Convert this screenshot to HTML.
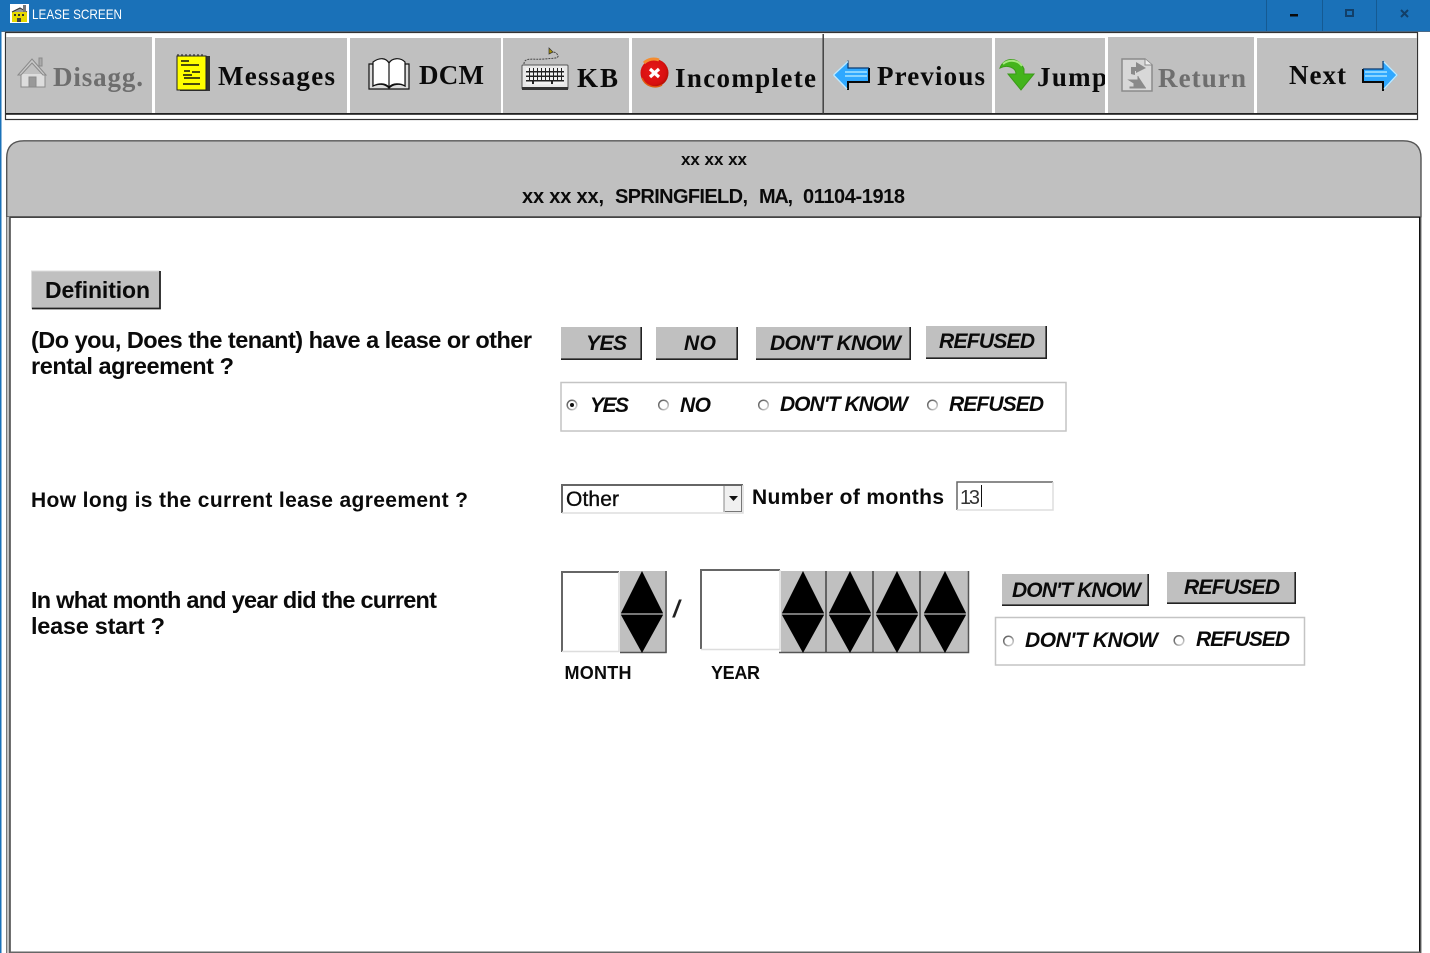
<!DOCTYPE html>
<html><head><meta charset="utf-8"><title>LEASE SCREEN</title>
<style>
html,body{margin:0;padding:0;background:#fff;width:1430px;height:953px;overflow:hidden}
svg{display:block}
.tb{font-family:"Liberation Serif",serif;font-weight:bold;font-size:27px;fill:#0a0a0a}
.dis{fill:#6e6e6e}
.s{font-family:"Liberation Sans",sans-serif}
.b{font-weight:bold;fill:#0a0a0a}
.bi{font-weight:bold;font-style:italic;font-size:21px;fill:#0a0a0a}
.q{font-size:23.5px}
</style></head><body>
<svg width="1430" height="953" viewBox="0 0 1430 953" xmlns="http://www.w3.org/2000/svg">
<defs>
<g id="diamond"><path d="M0 0L21 42H-21Z" fill="#000"/><path d="M-21 44H21L0 82Z" fill="#000"/><rect x="-21" y="42" width="42" height="2" fill="#777"/></g>
<linearGradient id="rg" x1="0" y1="0" x2="1" y2="1"><stop offset="0" stop-color="#555"/><stop offset=".5" stop-color="#888"/><stop offset="1" stop-color="#e4e4e4"/></linearGradient>
<radialGradient id="red" cx=".45" cy=".45" r=".6"><stop offset="0" stop-color="#e81818"/><stop offset=".75" stop-color="#d81010"/><stop offset="1" stop-color="#a81000"/></radialGradient>
</defs>
<!-- title bar -->
<rect width="1430" height="31" fill="#1a71b8"/>
<rect y="31" width="1430" height="1" fill="#4a6a88"/>
<rect x="10" y="4" width="19" height="19" fill="#fff"/>
<rect x="12" y="12" width="15" height="10" fill="#e6d800"/>
<path d="M12 12L20 8L27 12" fill="#999" stroke="#333"/>
<rect x="23" y="5" width="3" height="7" fill="#777"/>
<rect x="14" y="14" width="2" height="2" fill="#333"/><rect x="18" y="14" width="2" height="2" fill="#333"/><rect x="22" y="14" width="2" height="2" fill="#333"/><rect x="17" y="18" width="4" height="4" fill="#444"/>
<text class="s" x="32" y="19" font-size="14" fill="#fff" textLength="90" lengthAdjust="spacingAndGlyphs">LEASE SCREEN</text>
<rect x="1266" y="0" width="1" height="31" fill="#155a92"/>
<rect x="1322" y="0" width="1" height="31" fill="#155a92"/>
<rect x="1376" y="0" width="1" height="31" fill="#155a92"/>
<rect x="1290" y="14" width="8" height="2.500" fill="#0a0a0a"/>
<rect x="1346" y="10" width="7" height="6" fill="none" stroke="#123f68" stroke-width="2"/>
<path d="M1401 10L1408 17M1408 10L1401 17" stroke="#123f68" stroke-width="2"/>
<!-- left strip -->
<rect x="0" y="31" width="1.5" height="922" fill="#1a71b8"/>
<!-- toolbar -->
<rect x="5.5" y="32.5" width="1412" height="87" fill="#fff" stroke="#333" stroke-width="1.2"/>
<g fill="#c0c0c0">
<rect x="6" y="37" width="146" height="76"/><rect x="155" y="38" width="192" height="75"/><rect x="350" y="38" width="151" height="75"/>
<rect x="503" y="38" width="126" height="75"/><rect x="632" y="38" width="191" height="75"/><rect x="824" y="38" width="168" height="75"/>
<rect x="995" y="38" width="110" height="75"/><rect x="1108" y="37" width="146" height="76"/><rect x="1257" y="38" width="160" height="75"/>
</g>
<rect x="6" y="113" width="1411" height="1.8" fill="#222"/>
<rect x="822.5" y="34" width="1.4" height="80" fill="#333"/>
<!-- house -->
<g stroke="#8a8a8a" fill="#ddd" stroke-width="1">
<path d="M21 74V87H45V74"/><path d="M18 75L32 59L46 75H43L32 63L21 75Z" fill="#c8c8c8"/><rect x="39" y="58" width="3" height="8" fill="#aaa"/><rect x="29" y="77" width="7" height="10" fill="#999"/>
</g>
<text class="tb dis" x="53" y="86" textLength="90">Disagg.</text>
<!-- notepad -->
<rect x="180" y="56" width="30" height="35" fill="#333"/>
<rect x="177" y="56" width="29" height="34" fill="#ffff00" stroke="#222"/>
<path d="M178 56v-2M182 56v-2M186 56v-2M190 56v-2M194 56v-2M198 56v-2M202 56v-2" stroke="#111"/>
<path d="M181 61H189M181 65H199M184 71H190M192 72H200M183 75H192M184 78H200M183 84H200" stroke="#111" stroke-width="1.5"/>
<text class="tb" x="218" y="85" textLength="117">Messages</text>
<!-- book -->
<g fill="#fff" stroke="#111" stroke-width="1.2">
<path d="M369 89V64H373V86C380 83 385 84 389 88C393 84 400 83 405 86V64H409V89Z" fill="#ddd"/>
<path d="M373 86V62C380 57 386 58 389 63C392 58 400 57 405 62V86C400 83 393 83 389 87C385 83 379 83 373 86Z"/>
<path d="M389 63V87"/>
</g>
<text class="tb" x="419" y="84" textLength="65">DCM</text>
<!-- keyboard -->
<path d="M524 64C524 57 533 60 544 59C553 58 561 59 557 54C556 52 553 52 550 52" fill="none" stroke="#444" stroke-dasharray="2 1"/>
<path d="M549 54V48L553 52Z" fill="#a89000" stroke="#333" stroke-width=".7"/>
<rect x="522" y="65" width="46" height="24" rx="1" fill="#e8e8e8" stroke="#555"/>
<rect x="522" y="87" width="46" height="3" fill="#333"/>
<rect x="526" y="68" width="38" height="16" fill="#222"/>
<g stroke="#f2f2f2" stroke-width="3">
<path d="M526 69.500H564" stroke-dasharray="3 1"/>
<path d="M526 74H564" stroke-dasharray="3 1"/>
<path d="M526 78.500H564" stroke-dasharray="3 1"/>
<path d="M526 83H532M534 83H551M553 83H564"/>
</g>
<text class="tb" x="577" y="87" textLength="41">KB</text>
<!-- incomplete -->
<circle cx="654.500" cy="73" r="14" fill="url(#red)"/>
<path d="M644 63A14 14 0 0 1 659 60" fill="none" stroke="#f48c30" stroke-width="3"/>
<path d="M642 78A14 14 0 0 0 662 85" fill="none" stroke="#e05a10" stroke-width="1.500"/>
<path d="M650 69L659 77M659 69L650 77" stroke="#fff" stroke-width="3.200"/>
<text class="tb" x="675" y="87" textLength="141">Incomplete</text>
<!-- prev arrow -->
<path d="M833 75L848 60.500V68H869V82H848V90Z" fill="#2fa8ff"/>
<path d="M848 90V82H869V68" fill="none" stroke="#0a0a0a" stroke-width="2"/>
<path d="M848 60.500V68H869" fill="none" stroke="#0a3a70" stroke-width="1.200"/>
<path d="M833.500 75L848 61.500M833.500 75L847 89" fill="none" stroke="#bfeaff" stroke-width="1.300"/>
<path d="M845 72H867M845 76H867" stroke="#a8e4ff" stroke-width="1.500"/>
<text class="tb" x="877" y="85" textLength="108">Previous</text>
<!-- jump -->
<path d="M1000 68C1003 58 1018 55 1024 69V74H1034L1021 90L1008 74H1016C1016 68 1008 64 1000 68Z" fill="#44b41c" stroke="#3a9a18" stroke-width="1"/>
<path d="M1003 64C1009 59 1018 60 1022 66" fill="none" stroke="#a6e880" stroke-width="2"/>
<svg x="1030" y="50" width="75" height="50" viewBox="1030 50 75 50"><text class="tb" x="1037" y="86" textLength="70">Jump</text></svg>
<!-- return -->
<path d="M1122 59H1145L1152 65V91H1122Z" fill="#d8d8d8" stroke="#8a8a8a" stroke-width="1.500"/>
<path d="M1145 59V65H1152" fill="#eee" stroke="#8a8a8a"/>
<path d="M1131 74V67H1136V62L1146 68L1136 73V71H1135V75Z" fill="#8a8a8a"/>
<path d="M1138 76V80H1129L1137 85V83H1134V87H1130V88H1146" fill="#8a8a8a" stroke="#8a8a8a"/>
<text class="tb dis" x="1158" y="87" textLength="88">Return</text>
<!-- next -->
<text class="tb" x="1289" y="84" textLength="57">Next</text>
<path d="M1363 69H1383V60.500L1398 75L1383 91V82H1363Z" fill="#2fa8ff"/>
<path d="M1363 69V82H1383V91" fill="none" stroke="#0a0a0a" stroke-width="2"/>
<path d="M1363 69H1383V61" fill="none" stroke="#0a3a70" stroke-width="1.200"/>
<path d="M1384 62L1397 75L1384 89" fill="none" stroke="#bfeaff" stroke-width="1.300"/>
<path d="M1365 72H1387M1365 76H1387" stroke="#a8e4ff" stroke-width="1.500"/>
<!-- panel -->
<path d="M6.700 217V158Q6.700 140.800 24 140.800H1403Q1421 140.800 1421 158V217Z" fill="#c0c0c0" stroke="#555" stroke-width="1.400"/>
<rect x="6" y="217" width="1" height="736" fill="#777"/>
<rect x="7" y="217" width="3" height="736" fill="#c0c0c0"/>
<rect x="9.300" y="217" width="1.400" height="736" fill="#333"/>
<rect x="10" y="216.400" width="1410" height="1.600" fill="#444"/>
<rect x="1419" y="217" width="1.600" height="736" fill="#111"/>
<rect x="1420.600" y="217" width="1" height="736" fill="#888"/>
<rect x="10" y="951.500" width="1410" height="1.500" fill="#666"/>
<text class="s b" x="681" y="165" font-size="17" textLength="66">xx xx xx</text>
<g class="s b" font-size="20">
<text class="s b" x="522" y="203" font-size="20" textLength="82">xx xx xx,</text>
<text class="s b" x="615" y="203" font-size="20" textLength="133">SPRINGFIELD,</text>
<text class="s b" x="759" y="203" font-size="20" textLength="34">MA,</text>
<text class="s b" x="803" y="203" font-size="20" textLength="102">01104-1918</text>
</g>
<!-- definition -->
<rect x="31.500" y="271" width="129" height="38" fill="#c0c0c0"/>
<path d="M31.500 309V271H160" fill="none" stroke="#ddd"/>
<path d="M32 308.500H160V271" fill="none" stroke="#222" stroke-width="1.800"/>
<text class="s b" x="45" y="298" font-size="23" textLength="105">Definition</text>
<!-- questions -->
<text class="s b q" x="31" y="348" textLength="501">(Do you, Does the tenant) have a lease or other</text>
<text class="s b q" x="31" y="374" textLength="203">rental agreement ?</text>
<text class="s b" x="31" y="507" font-size="21" textLength="437">How long is the current lease agreement ?</text>
<text class="s b q" x="31" y="608" textLength="406">In what month and year did the current</text>
<text class="s b q" x="31" y="634" textLength="134">lease start ?</text>
<!-- buttons row 1 -->
<g fill="#c0c0c0">
<rect x="561" y="327" width="81" height="33"/><rect x="656" y="327" width="82" height="33"/><rect x="756" y="327" width="155" height="33"/><rect x="926" y="326" width="121" height="33"/>
<rect x="1002" y="574" width="147" height="32"/><rect x="1167" y="572" width="129" height="32"/>
</g>
<g fill="none" stroke="#222" stroke-width="1.600">
<path d="M561 359.200H641.200V327"/><path d="M656 359.200H737.200V327"/><path d="M756 359.200H910.200V327"/><path d="M926 358.200H1046.200V326"/>
<path d="M1002 605.200H1148.200V574"/><path d="M1167 603.200H1295.200V572"/>
</g>
<text class="s bi" x="586" y="350" textLength="41">YES</text>
<text class="s bi" x="684" y="350" textLength="32">NO</text>
<text class="s bi" x="770" y="350" textLength="131">DON'T KNOW</text>
<text class="s bi" x="939" y="348" textLength="96">REFUSED</text>
<!-- radio box 1 -->
<rect x="561" y="382.500" width="505" height="48.500" fill="#fff" stroke="#c4c4c4" stroke-width="1.500"/>
<g fill="#fff" stroke="url(#rg)" stroke-width="1.500">
<circle cx="572" cy="405" r="4.800"/><circle cx="663.500" cy="405" r="4.800"/><circle cx="763.500" cy="405" r="4.800"/><circle cx="932.500" cy="405" r="4.800"/>
<circle cx="1008.500" cy="641" r="4.800"/><circle cx="1179" cy="640.500" r="4.800"/>
</g>
<circle cx="572" cy="405" r="2" fill="#111"/>
<text class="s bi" x="590" y="412" textLength="39">YES</text>
<text class="s bi" x="680" y="412" textLength="31">NO</text>
<text class="s bi" x="780" y="411" textLength="128">DON'T KNOW</text>
<text class="s bi" x="949" y="411" textLength="95">REFUSED</text>
<!-- select -->
<rect x="562" y="485" width="180" height="27.500" fill="#fff"/>
<path d="M562 513V485H743" fill="none" stroke="#666" stroke-width="2"/>
<path d="M562 513H743V485" fill="none" stroke="#ddd" stroke-width="1.500"/>
<rect x="724" y="486" width="18" height="26" fill="#f0f0f0"/>
<path d="M724 486V512" stroke="#888"/>
<path d="M725 511.500H741.500V486" fill="none" stroke="#777"/>
<path d="M729 496H738L733.500 501Z" fill="#111"/>
<text class="s" x="566" y="506" font-size="21" fill="#0a0a0a" textLength="53" stroke="#0a0a0a" stroke-width=".35">Other</text>
<text class="s b" x="752" y="504" font-size="21" textLength="192">Number of months</text>
<!-- input -->
<path d="M957 510V482H1053" fill="none" stroke="#666" stroke-width="1.500"/>
<path d="M957 510H1053V482" fill="none" stroke="#ddd" stroke-width="1.500"/>
<text class="s" x="960" y="504" font-size="20" fill="#333" textLength="20">13</text>
<rect x="981" y="485" width="1" height="22" fill="#111"/>
<!-- spinners -->
<path d="M562 652V572H619" fill="none" stroke="#666" stroke-width="2"/>
<path d="M562 651.500H619V572" fill="none" stroke="#ddd" stroke-width="1.500"/>
<rect x="620" y="571" width="47" height="82" fill="#c0c0c0"/>
<path d="M620 652.500H666V571" fill="none" stroke="#555" stroke-width="1.500"/>
<use href="#diamond" x="642" y="571"/>
<text class="s" x="673" y="617" font-size="24" font-weight="bold" font-style="italic" fill="#222">/</text>
<path d="M701 649V570H780" fill="none" stroke="#666" stroke-width="2"/>
<path d="M701 649.500H780V570" fill="none" stroke="#ddd" stroke-width="1.500"/>
<rect x="781" y="571" width="188" height="82" fill="#c0c0c0"/>
<path d="M779 652.500H968.500V571" fill="none" stroke="#555" stroke-width="1.500"/>
<path d="M826 571V652M873 571V652M920 571V652" stroke="#444" stroke-width="1.500"/>
<use href="#diamond" x="803" y="571"/><use href="#diamond" x="850" y="571"/><use href="#diamond" x="897" y="571"/><use href="#diamond" x="945" y="571"/>
<text class="s b" x="564.500" y="679" font-size="18" textLength="67">MONTH</text>
<text class="s b" x="711" y="679" font-size="18" textLength="49">YEAR</text>
<!-- group 2 -->
<text class="s bi" x="1012" y="597" textLength="129">DON'T KNOW</text>
<text class="s bi" x="1184" y="594" textLength="96">REFUSED</text>
<rect x="995.500" y="617.500" width="309" height="47.500" fill="none" stroke="#c4c4c4" stroke-width="1.500"/>
<text class="s bi" x="1025" y="647" textLength="133">DON'T KNOW</text>
<text class="s bi" x="1196" y="646" textLength="94">REFUSED</text>
</svg>
</body></html>
